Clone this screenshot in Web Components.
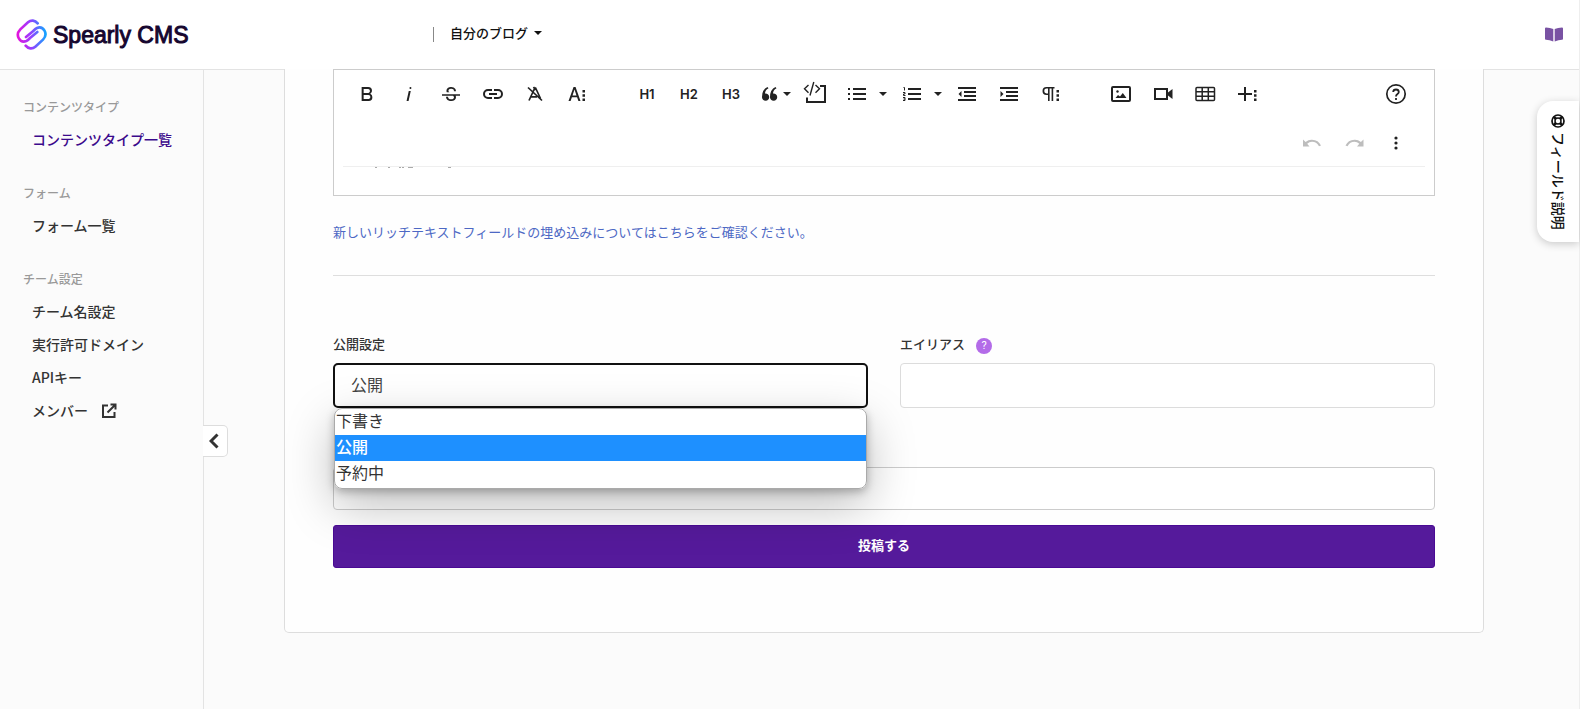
<!DOCTYPE html>
<html lang="ja">
<head>
<meta charset="utf-8">
<title>Spearly CMS</title>
<style>
  body {
    margin: 0;
    background: #fbfbfb;
    color: #333;
    font-family: "Noto Sans CJK JP", "Noto Sans", sans-serif;
    font-size: 13px;
    line-height: 20px;
  }
</style>
</head>
<body>
<cms-app></cms-app>

<template id="t-app">
  <style>
    :host { display: flex; flex-direction: column; min-height: 100vh; position: relative; border-right: 1px solid #eee; }
    .body { display: flex; flex: 1; }
    main { flex: 1; min-width: 0; padding: 0 95px 76px 80px; }
    cms-help-tab { position: absolute; right: 0; top: 101px; }
  </style>
  <cms-header></cms-header>
  <div class="body">
    <cms-sidebar></cms-sidebar>
    <main><cms-content-form></cms-content-form></main>
  </div>
  <cms-help-tab>フィールド説明</cms-help-tab>
</template>

<template id="t-header">
  <style>
    :host { display: block; margin-bottom: -1px; }
    header { display: flex; align-items: center; height: 69px; padding: 0 16px; background: #fff; border-bottom: 1px solid #e3e3e3; }
    .brand { flex: 0 0 417px; display: flex; align-items: center; gap: 5px; color: #16062f; text-decoration: none; font: 23px/32px "Liberation Sans", Arial, sans-serif; -webkit-text-stroke: 1px #16062f; }
    .sep { width: 1px; height: 15px; background: #888; }
    .team { display: flex; align-items: center; gap: 6px; margin-left: 16px; padding: 0 0 3px; border: 0; background: none; color: #111; font: inherit; font-weight: 500; line-height: 20px; }
    .docs { margin-left: auto; display: flex; }
  </style>
  <header>
    <a class="brand" href="#">
      <svg width="32" height="31" viewBox="48 57 96 93" fill="none" stroke="url(#g)" stroke-width="8" stroke-linecap="round">
        <defs><linearGradient id="g" gradientUnits="userSpaceOnUse" x1="52" y1="105" x2="138" y2="100"><stop offset="0" stop-color="#e414dc"/><stop offset=".45" stop-color="#9a3cff"/><stop offset="1" stop-color="#12a5ff"/></linearGradient></defs>
        <path d="M113 70C105 60 93 59 84 67L61 88C44 106 60 130 79 123C84 121 87 117 91 113L112 96"/>
        <path d="M77 137C85 147 97 148 106 140L129 119C146 101 130 77 111 84C106 86 103 90 99 94L78 111"/>
      </svg>
      <span>Spearly CMS</span>
    </a>
    <span class="sep"></span>
    <button class="team" type="button">自分のブログ
      <svg width="8" height="4" viewBox="0 0 8 4"><path d="M0 0h8L4 4z" fill="#111"/></svg>
    </button>
    <a class="docs" href="#" aria-label="ドキュメント">
      <svg width="18" height="15" viewBox="0 0 18 15" fill="#7952a3"><path d="M0 1.5Q0 .5 1 .5Q5 .5 8.3 2V14.5Q4.500 12.800 1 12.800Q0 12.800 0 12zM18 1.500Q18 .5 17 .5Q13 .5 9.700 2V14.500Q13.500 12.800 17 12.800Q18 12.800 18 12z"/></svg>
    </a>
  </header>
</template>

<template id="t-sidebar">
  <style>
    :host { display: block; position: relative; flex: 0 0 203px; border-right: 1px solid #e3e3e3; }
    nav { display: flex; flex-direction: column; gap: 20px; padding-top: 21px; }
    .fold { position: absolute; left: 203px; top: 356px; box-sizing: border-box; width: 25px; height: 32px; padding: 0 2px 0 0; display: flex; align-items: center; justify-content: center; background: #fff; border: 1px solid #ddd; border-left: 0; border-radius: 0 5px 5px 0; }
  </style>
  <nav>
    <cms-nav-group heading="コンテンツタイプ">
      <cms-nav-item active>コンテンツタイプ一覧</cms-nav-item>
    </cms-nav-group>
    <cms-nav-group heading="フォーム">
      <cms-nav-item>フォーム一覧</cms-nav-item>
    </cms-nav-group>
    <cms-nav-group heading="チーム設定">
      <cms-nav-item>チーム名設定</cms-nav-item>
      <cms-nav-item>実行許可ドメイン</cms-nav-item>
      <cms-nav-item>APIキー</cms-nav-item>
      <cms-nav-item>メンバー
        <svg slot="icon" width="16" height="16" viewBox="0 0 16 16" fill="none" stroke="#333" stroke-width="2"><path d="M7 2.500H2V14H13.500V9M9.500 1.500H14.500V6.500M14 2L6.500 9.500"/></svg>
      </cms-nav-item>
    </cms-nav-group>
  </nav>
  <button class="fold" type="button" aria-label="メニューを閉じる">
    <svg width="10" height="16" viewBox="0 0 10 16" fill="none" stroke="#333" stroke-width="3"><path d="M8.500 1.500L2 8l6.500 6.500"/></svg>
  </button>
</template>

<template id="t-nav-group">
  <style>
    :host { display: block; }
    h2 { margin: 0; padding-left: 23px; color: #999; font-size: 12px; font-weight: 500; line-height: 33px; }
  </style>
  <h2></h2>
  <slot></slot>
</template>

<template id="t-nav-item">
  <style>
    :host { display: block; color: #333; }
    :host([active]) { color: #3b0a8c; }
    a { display: flex; align-items: center; gap: 13px; padding-left: 32px; color: inherit; text-decoration: none; font-size: 14px; font-weight: 500; line-height: 33px; }
  </style>
  <a href="#"><span><slot></slot></span><slot name="icon"></slot></a>
</template>

<template id="t-tool">
  <style>
    :host { display: flex; flex: none; }
    button { display: flex; align-items: center; justify-content: center; width: 38px; height: 38px; padding: 0; border: 0; background: none; color: #222; font: 600 13px/38px Inter, sans-serif; }
    :host([disabled]) button { color: #bdbdbd; }
    .caret { display: none; width: 13px; }
    :host([split]) .caret { display: flex; }
  </style>
  <button class="main" type="button"><slot></slot></button>
  <button class="caret" type="button" aria-label="オプション"><svg width="8" height="4" viewBox="0 0 8 4"><path d="M0 0h8L4 4z" fill="#222"/></svg></button>
</template>

<template id="t-editor">
  <style>
    :host { display: block; height: 125px; border: 1px solid #ccc; background: #fff; }
    .bar { margin: 0 9px; padding-bottom: 4px; border-bottom: 1px solid #efefef; }
    .row { display: flex; gap: 32px; padding: 5px 10px 6px 5px; }
    .row + .row { padding: 5px 10px 0 5px; }
    .group { display: flex; gap: 4px; }
    .end { margin-left: auto; }
    .peek { display: block; margin-left: 50px; color: #aaa; }
    .s { fill: none; stroke: currentColor; stroke-width: 2; }
    svg { fill: currentColor; display: block; overflow: visible; }
  </style>
  <div class="bar">
    <div class="row">
      <div class="group">
        <cms-tool label="太字"><svg width="24" height="24" viewBox="0 0 24 24"><path d="M15.25,11.8h0A3.68,3.68,0,0,0,17,9a3.93,3.93,0,0,0-3.86-4H6.65V19h7a3.74,3.74,0,0,0,3.7-3.78V15.1A3.64,3.64,0,0,0,15.25,11.8ZM8.65,7h4.2a2.09,2.09,0,0,1,2,1.3,2.09,2.09,0,0,1-1.37,2.61,2.23,2.23,0,0,1-.63.09H8.65Zm4.6,10H8.65V13h4.6a2.09,2.09,0,0,1,2,1.3,2.09,2.09,0,0,1-1.37,2.61A2.23,2.23,0,0,1,13.25,17Z"/></svg></cms-tool>
        <cms-tool label="斜体"><svg width="24" height="24" viewBox="0 0 24 24"><path d="M11.76,9h2l-2.2,10h-2Zm1.68-4a1,1,0,1,0,1,1,1,1,0,0,0-1-1Z"/></svg></cms-tool>
        <cms-tool label="取り消し線"><svg width="24" height="24" viewBox="0 0 24 24"><path d="M3,12.20294H21v1.5H16.63422a3.59782,3.59782,0,0,1,.34942,1.5929,3.252,3.252,0,0,1-1.31427,2.6997A5.55082,5.55082,0,0,1,12.20251,19a6.4421,6.4421,0,0,1-2.62335-.539,4.46335,4.46335,0,0,1-1.89264-1.48816,3.668,3.668,0,0,1-.67016-2.15546V14.704H9.02v.11334a2.18275,2.18275,0,0,0,.85413,1.83069,3.69,3.69,0,0,0,2.32836.67926,3.38778,3.38778,0,0,0,2.07666-.5462,1.73346,1.73346,0,0,0,.7013-1.46655,1.69749,1.69749,0,0,0-.647-1.43439,3.00525,3.00525,0,0,0-.27491-.17725H3ZM16.34473,7.05981A4.18163,4.18163,0,0,0,14.6236,5.5462,5.627,5.627,0,0,0,12.11072,5,5.16083,5.16083,0,0,0,8.74719,6.06213,3.36315,3.36315,0,0,0,7.44006,8.76855a3.22923,3.22923,0,0,0,.3216,1.42786h2.59668c-.08338-.05365-.18537-.10577-.25269-.16064a1.60652,1.60652,0,0,1-.65283-1.30036,1.79843,1.79843,0,0,1,.68842-1.5108,3.12971,3.12971,0,0,1,1.96948-.55243,3.04779,3.04779,0,0,1,2.106.6687,2.35066,2.35066,0,0,1,.736,1.83258v.11341h2.00317V9.17346A3.90013,3.90013,0,0,0,16.34473,7.05981Z"/></svg></cms-tool>
        <cms-tool label="リンク"><svg class="s" width="24" height="24" viewBox="0 0 24 24"><path d="M11 8H7a4 4 0 0 0 0 8h4M13 8h4a4 4 0 0 1 0 8h-4M8 12h8"/></svg></cms-tool>
        <cms-tool label="書式クリア"><svg class="s" width="24" height="24" viewBox="0 0 24 24"><path stroke-width="1.700" d="M6 18.500L11.800 6h.8L17.500 16.500M8 14.800h6M5 5.500L19 18.500M10.500 5l2 3"/></svg></cms-tool>
        <cms-tool label="その他の文字書式"><svg width="24" height="24" viewBox="0 0 24 24"><path d="M8.550 5h2L15.500 19h-2.100l-1.300-3.700H6.900L5.600 19H3.500zM9.500 7.500L7.500 13.500h4z"/><path d="M17.500 8h2.500v2.500h-2.500zM17.500 12.200h2.500v2.500h-2.500zM17.500 16.400h2.500v2.500h-2.500z"/></svg></cms-tool>
      </div>
      <div class="group">
        <cms-tool>H1</cms-tool>
        <cms-tool>H2</cms-tool>
        <cms-tool>H3</cms-tool>
        <cms-tool label="引用"><svg width="28" height="24" viewBox="0 0 28 24"><path d="M8.500 5Q3 7.500 3 15a3.600 3.600 0 1 0 3-3.400Q6 8 9.500 6.200zM16.500 5Q11 7.500 11 15a3.600 3.600 0 1 0 3-3.400Q14 8 17.500 6.200zM24 10h8l-4 4z"/></svg></cms-tool>
        <cms-tool label="埋め込みコード"><svg class="s" width="24" height="24" viewBox="0 0 24 24"><path d="M17 4H22V20H4V15.500"/><path stroke-width="1.400" d="M5.500 3L1.500 6.800L5.500 10.800M12.500 3L16.500 6.800L12.500 10.800M10.800 0L7 13.500"/></svg></cms-tool>
        <cms-tool label="箇条書き" split><svg class="s" width="24" height="24" viewBox="0 0 24 24"><path d="M8 7h13M8 12h13M8 17h13M3 7h2M3 12h2M3 17h2"/></svg></cms-tool>
        <cms-tool label="番号付きリスト" split><svg class="s" width="24" height="24" viewBox="0 0 24 24"><path d="M8 7h13M8 12h13M8 17h13"/><path stroke-width="1" d="M3.500 5.500h1V8.500M3 10.500h2v1.500h-1.500v1.500h2M3 15.500h2v3H3M3.500 17h1.500"/></svg></cms-tool>
        <cms-tool label="インデント解除"><svg class="s" width="24" height="24" viewBox="0 0 24 24"><path d="M3 6h18M9 10h12M9 14h12M3 18h18"/><path d="M6.500 9v6L3.500 12z" fill="currentColor" stroke="none"/></svg></cms-tool>
        <cms-tool label="インデント"><svg class="s" width="24" height="24" viewBox="0 0 24 24"><path d="M3 6h18M9 10h12M9 14h12M3 18h18"/><path d="M3.500 9v6L6.500 12z" fill="currentColor" stroke="none"/></svg></cms-tool>
        <cms-tool label="その他の段落"><svg width="24" height="24" viewBox="0 0 24 24"><path fill-rule="evenodd" d="M7.500 5H15.500V6.600H14.200V19H12.600V6.600H10.600V19H9V13H7.500A4 4 0 0 1 7.500 5zM9 6.600H7.600A2.400 2.400 0 0 0 7.600 11.400H9z"/><path d="M17.500 8h2.500v2.500h-2.500zM17.500 12.200h2.500v2.500h-2.500zM17.500 16.400h2.500v2.500h-2.500z"/></svg></cms-tool>
      </div>
      <div class="group">
        <cms-tool label="画像"><svg class="s" width="24" height="24" viewBox="0 0 24 24"><rect x="3" y="5" width="18" height="14" rx="1"/><path d="M6.500 16l2.500-3 2 1.500 2.800-3.500 3.700 5z" fill="currentColor" stroke="none"/><circle cx="8.500" cy="9.500" r="1.200" fill="currentColor" stroke="none"/></svg></cms-tool>
        <cms-tool label="動画"><svg class="s" width="24" height="24" viewBox="0 0 24 24"><rect x="4" y="7" width="12" height="10"/><path d="M17 10.500L21.500 7V17L17 13.500z" fill="currentColor" stroke="none"/></svg></cms-tool>
        <cms-tool label="表"><svg class="s" width="24" height="24" viewBox="0 0 24 24"><rect x="3" y="5.500" width="18.500" height="13" rx="1" stroke-width="1.500"/><path stroke-width="1.500" d="M3 9.800h18.500M3 14.200h18.500M9.200 5.500v13M15.300 5.500v13"/></svg></cms-tool>
        <cms-tool label="その他のリッチ"><svg width="24" height="24" viewBox="0 0 24 24"><path d="M9 5h2v6h6v2h-6v6H9v-6H3v-2h6z"/><path d="M19 8h2.500v2.500H19zM19 12.200h2.500v2.500H19zM19 16.400h2.500v2.500H19z"/></svg></cms-tool>
      </div>
      <div class="group end">
        <cms-tool label="ヘルプ"><svg class="s" width="24" height="24" viewBox="0 0 24 24"><circle cx="12" cy="12" r="9.200" stroke-width="1.700"/><path stroke-width="1.800" d="M9.200 10Q9.300 7.500 12 7.500T14.800 10Q14.800 11 13.200 12.200Q12 13 12 14.500M12 16v2"/></svg></cms-tool>
      </div>
    </div>
    <div class="row">
      <div class="group end">
        <cms-tool label="元に戻す" disabled><svg width="24" height="24" viewBox="0 0 24 24"><path d="M3 8.500L5.600 11Q8.500 8.500 12 8.700Q18.500 9 21 14.500L19 15.200Q16.500 10.800 12 10.800Q9.400 10.800 7.200 12.700L9.500 15.500H3z"/></svg></cms-tool>
        <cms-tool label="やり直し" disabled><svg width="24" height="24" viewBox="0 0 24 24"><path d="M21.500 8.500L18.900 11Q16 8.500 12.500 8.700Q6 9 3.500 14.500L5.500 15.200Q8 10.800 12.500 10.800Q15.100 10.800 17.300 12.700L15 15.500H21.500z"/></svg></cms-tool>
        <cms-tool label="その他"><svg width="24" height="24" viewBox="0 0 24 24"><circle cx="12" cy="7" r="1.600"/><circle cx="12" cy="12" r="1.600"/><circle cx="12" cy="17" r="1.600"/></svg></cms-tool>
      </div>
    </div>
  </div>
  <svg class="peek" width="80" height="2" viewBox="0 0 80 2"><path d="M-9 0h2v1h-2zM4 0h2v1h-2zM15 0h2v1h-2zM18 0h2v1h-2zM24 0h5v1h-5zM64 0h3v1h-3z"/></svg>
</template>

<template id="t-field">
  <style>
    :host { display: block; min-width: 0; position: relative; }
    .head { display: flex; align-items: center; gap: 11px; margin-bottom: 8px; font-weight: 500; }
    label { padding-bottom: 2px; line-height: 18px; }
    input, select { display: block; box-sizing: border-box; width: 100%; height: 45px; margin: 0; padding: 0 16px; border: 1px solid #dcdcdc; border-radius: 4px; background: #fff; color: #444; font: inherit; font-size: 16px; outline: none; appearance: none; }
    select { padding-bottom: 4px; border: 2px solid #111; border-radius: 5px; }
    input.plain { height: 43px; border-color: #ccc; }
    .help { width: 16px; height: 16px; margin-top: 2px; padding: 0; border: 0; border-radius: 8px; background: #b36be8; color: #fff; font: 11px/16px Roboto, sans-serif; text-align: center; }
  </style>
</template>

<template id="t-options">
  <style>
    :host { position: absolute; z-index: 2; top: 73px; left: 1px; right: 1px; border-radius: 8px; box-shadow: 0 16px 48px rgba(0, 0, 0, .26), 0 3px 8px rgba(0, 0, 0, .25); }
    ul { margin: 0; padding: 0; list-style: none; overflow: hidden; background: #fff; border: 1px solid #aaa; border-radius: 8px; }
    li { padding: 0 1px 3px; color: #333; font-size: 16px; line-height: 23px; height: 23px; }
    li[aria-selected="true"] { background: #1e90ff; color: #fff; font-weight: 500; }
    li:last-child { padding-bottom: 4px; }
  </style>
  <ul role="listbox" aria-label="公開設定"></ul>
</template>

<template id="t-content-form">
  <style>
    :host { display: block; padding: 0 48px 64px; background: #fefefe; border: 1px solid #ddd; border-top: 0; border-radius: 0 0 5px 5px; }
    .note { display: block; margin-top: 26px; color: #4d68c4; text-decoration: none; }
    hr { height: 1px; margin: 33px 0 59px; border: 0; background: #dedede; }
    .pair { display: grid; grid-template-columns: 1fr 1fr; gap: 32px; margin-bottom: 59px; }
    .submit { display: block; width: 100%; height: 43px; margin-top: 15px; padding: 0 0 3px; border: 1px solid #4a0a94; border-radius: 3px; background: #551a9b; color: #fff; font: inherit; font-weight: 700; }
  </style>
  <cms-editor></cms-editor>
  <a class="note" href="#">新しいリッチテキストフィールドの埋め込みについてはこちらをご確認ください。</a>
  <hr>
  <form>
    <div class="pair">
      <cms-field label="公開設定" options="下書き,公開,予約中" value="公開"></cms-field>
      <cms-field label="エイリアス" help></cms-field>
    </div>
    <cms-field plain></cms-field>
    <button class="submit" type="button">投稿する</button>
  </form>
</template>

<template id="t-help-tab">
  <style>
    :host { display: block; }
    button { display: flex; flex-direction: column; align-items: center; gap: 4px; box-sizing: border-box; width: 42px; height: 141px; padding: 13px 0 0; border: 0; border-radius: 16px 0 0 16px; background: #fff; box-shadow: 0 2px 8px rgba(0, 0, 0, .2); color: #111; font: inherit; font-weight: 500; }
    span { padding-left: 2px; writing-mode: vertical-rl; text-orientation: sideways; line-height: 20px; font-size: 14px; }
  </style>
  <button type="button">
    <svg width="14" height="14" viewBox="0 0 14 14" fill="none" stroke="#111"><circle cx="7" cy="7" r="6" stroke-width="1.700"/><circle cx="7" cy="7" r="3" stroke-width="1.500"/><path stroke-width="2.500" d="M2.800 2.800L5 5M9 9l2.200 2.200M11.200 2.800L9 5M5 9L2.800 11.200"/></svg>
    <span><slot></slot></span>
  </button>
</template>

<script>
  class Base extends HTMLElement {
    constructor() {
      super();
      this.attachShadow({ mode: 'open' });
      this.shadowRoot.append(document.getElementById(this.constructor.template).content.cloneNode(true));
    }
    $(selector) { return this.shadowRoot.querySelector(selector); }
  }

  class CmsNavItem extends Base { static template = 't-nav-item'; }
  class CmsNavGroup extends Base {
    static template = 't-nav-group';
    connectedCallback() { this.$('h2').textContent = this.getAttribute('heading'); }
  }
  class CmsSidebar extends Base { static template = 't-sidebar'; }
  class CmsHeader extends Base { static template = 't-header'; }
  class CmsTool extends Base {
    static template = 't-tool';
    connectedCallback() {
      const button = this.$('.main');
      if (this.hasAttribute('label')) button.setAttribute('aria-label', this.getAttribute('label'));
      button.disabled = this.hasAttribute('disabled');
    }
  }
  class CmsEditor extends Base { static template = 't-editor'; }

  // Open list of choices shown below a select field.
  class CmsOptions extends Base {
    static template = 't-options';
    fill(options, value) {
      for (const text of options) {
        const li = document.createElement('li');
        li.setAttribute('role', 'option');
        li.setAttribute('aria-selected', String(text === value));
        li.textContent = text;
        this.$('ul').append(li);
      }
    }
  }

  class CmsField extends Base {
    static template = 't-field';
    connectedCallback() {
      const root = this.shadowRoot;
      const label = this.getAttribute('label');
      if (label) {
        const head = document.createElement('div');
        head.className = 'head';
        head.innerHTML = '<label for="control"></label>';
        head.firstChild.textContent = label;
        if (this.hasAttribute('help')) head.insertAdjacentHTML('beforeend', '<button class="help" type="button">?</button>');
        root.append(head);
      }
      const options = this.getAttribute('options');
      const control = document.createElement(options ? 'select' : 'input');
      control.id = 'control';
      if (this.hasAttribute('plain')) {
        control.className = 'plain';
        control.setAttribute('aria-label', '公開日時');
      }
      root.append(control);
      if (options) {
        const list = options.split(',');
        for (const text of list) control.add(new Option(text));
        control.value = this.getAttribute('value');
        const popup = document.createElement('cms-options');
        popup.fill(list, control.value);
        root.append(popup);
      }
    }
  }
  class CmsContentForm extends Base { static template = 't-content-form'; }
  class CmsHelpTab extends Base { static template = 't-help-tab'; }
  class CmsApp extends Base { static template = 't-app'; }

  customElements.define('cms-nav-item', CmsNavItem);
  customElements.define('cms-nav-group', CmsNavGroup);
  customElements.define('cms-sidebar', CmsSidebar);
  customElements.define('cms-header', CmsHeader);
  customElements.define('cms-tool', CmsTool);
  customElements.define('cms-editor', CmsEditor);
  customElements.define('cms-options', CmsOptions);
  customElements.define('cms-field', CmsField);
  customElements.define('cms-content-form', CmsContentForm);
  customElements.define('cms-help-tab', CmsHelpTab);
  customElements.define('cms-app', CmsApp);
</script>
</body>
</html>
